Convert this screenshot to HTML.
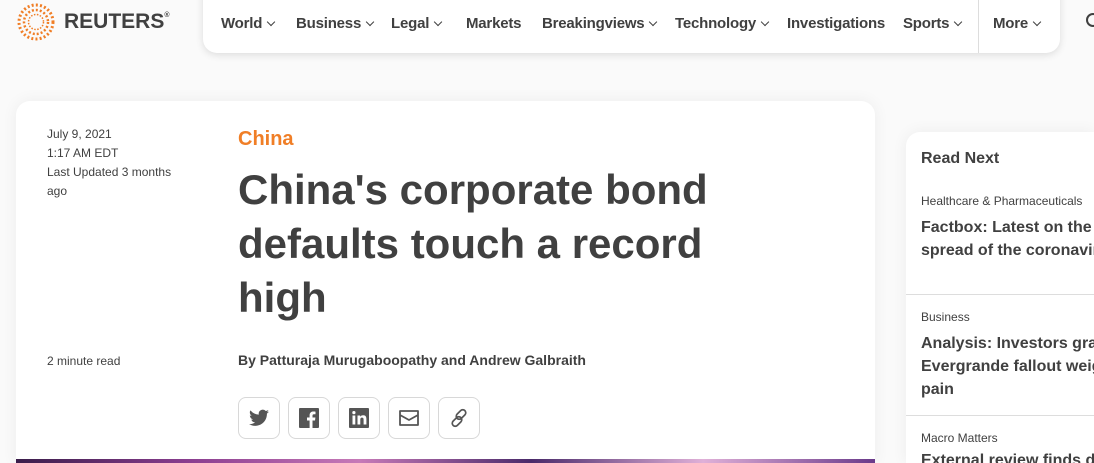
<!DOCTYPE html>
<html style="width:1094px;height:463px;overflow:hidden"><head><style>
*{margin:0;padding:0;box-sizing:border-box}
body{width:1094px;height:463px;overflow:hidden;background:#fafafa;font-family:"Liberation Sans",sans-serif;color:#404040;position:relative}
.nav{position:absolute;left:203px;top:-10px;width:857px;height:63px;background:#fff;border-radius:0 0 14px 14px;box-shadow:0 2px 8px rgba(0,0,0,.12)}
.nav span{position:absolute;top:25px;font-size:15px;font-weight:bold;color:#404040;letter-spacing:-.2px}
.chev{display:inline-block;width:6px;height:6px;border-right:1.6px solid #404040;border-bottom:1.6px solid #404040;transform:rotate(45deg);margin-left:6px;position:relative;top:-3px}
.card{position:absolute;left:16px;top:101px;width:859px;height:362px;background:#fff;border-radius:14px 14px 0 0;box-shadow:0 0 16px rgba(0,0,0,.06)}
.rcard{position:absolute;left:906px;top:132px;width:188px;height:331px;background:#fff;border-radius:14px 0 0 0;box-shadow:0 0 16px rgba(0,0,0,.06);overflow:hidden}
.abs{position:absolute}
.btn{position:absolute;top:397px;width:42px;height:42px;border:1px solid #d8d8d8;border-radius:8px;display:flex;align-items:center;justify-content:center}
</style></head><body>
<svg class="abs" style="left:16px;top:3px" width="40" height="38" viewBox="0 0 40 38">
<circle cx="20" cy="19" r="17" fill="none" stroke="#f07e26" stroke-width="3" stroke-dasharray="2 2.2"/>
<circle cx="20" cy="19" r="12" fill="none" stroke="#f07e26" stroke-width="2.5" stroke-dasharray="2 2"/>
<circle cx="20" cy="19" r="7.5" fill="none" stroke="#f07e26" stroke-width="1.5" stroke-dasharray="1.5 1.5"/>
</svg>
<div class="abs" style="left:64px;top:10px;font-size:21px;font-weight:bold;color:#404040">REUTERS<sup style="font-size:7px;vertical-align:top;position:relative;top:2px">®</sup></div>
<div class="nav">
<span style="left:18px">World<i class="chev"></i></span>
<span style="left:93px">Business<i class="chev"></i></span>
<span style="left:188px">Legal<i class="chev"></i></span>
<span style="left:263px">Markets</span>
<span style="left:339px">Breakingviews<i class="chev"></i></span>
<span style="left:472px">Technology<i class="chev"></i></span>
<span style="left:584px">Investigations</span>
<span style="left:700px">Sports<i class="chev"></i></span>
<div class="abs" style="left:775px;top:10px;width:1px;height:53px;background:#ddd"></div>
<span style="left:790px">More<i class="chev"></i></span>
</div>
<svg class="abs" style="left:1085px;top:12px" width="16" height="18"><circle cx="8" cy="8" r="6" fill="none" stroke="#404040" stroke-width="2"/></svg>
<div class="card"></div>
<div class="abs" style="left:47px;top:125px;font-size:12px;line-height:19px;color:#404040;width:140px">July 9, 2021<br>1:17 AM EDT<br>Last Updated 3 months ago</div>
<div class="abs" style="left:238px;top:128px;font-size:20px;font-weight:bold;color:#f07e26">China</div>
<div class="abs" style="left:238px;top:163px;font-size:42px;font-weight:bold;line-height:54px;color:#404040;width:500px">China's corporate bond defaults touch a record high</div>
<div class="abs" style="left:47px;top:354px;font-size:12px">2 minute read</div>
<div class="abs" style="left:238px;top:352px;font-size:14px;font-weight:bold">By Patturaja Murugaboopathy and Andrew Galbraith</div>
<div class="btn" style="left:238px"><svg width="20" height="18" viewBox="0 0 24 20"><path fill="#555" d="M24 2.4a9.8 9.8 0 0 1-2.8.8A4.9 4.9 0 0 0 23.3.4a9.9 9.9 0 0 1-3.1 1.2A4.9 4.9 0 0 0 11.8 6 14 14 0 0 1 1.7.9a4.9 4.9 0 0 0 1.5 6.6A4.9 4.9 0 0 1 1 6.9a4.9 4.9 0 0 0 3.9 4.8 4.9 4.9 0 0 1-2.2.1 4.9 4.9 0 0 0 4.6 3.4A9.9 9.9 0 0 1 0 17.2 14 14 0 0 0 7.5 19.4c9.1 0 14-7.5 14-14v-.6A10 10 0 0 0 24 2.4z"/></svg></div>
<div class="btn" style="left:288px"><svg width="20" height="20"><rect width="20" height="20" rx="1" fill="#555"/><path fill="#fff" d="M13.5 20v-7.5h2.5l.4-3h-2.9V7.7c0-.8.3-1.4 1.5-1.4h1.5V3.6c-.3 0-1.2-.1-2.2-.1-2.2 0-3.7 1.3-3.7 3.8v2.2H8v3h2.6V20z"/></svg></div>
<div class="btn" style="left:338px"><svg width="20" height="20"><rect width="20" height="20" rx="1" fill="#555"/><rect x="3.5" y="7.5" width="2.8" height="9" fill="#fff"/><circle cx="4.9" cy="4.6" r="1.6" fill="#fff"/><path fill="#fff" d="M8.5 7.5h2.7v1.3c.5-.9 1.6-1.5 3-1.5 2.6 0 3.2 1.7 3.2 3.9v5.3h-2.8v-4.7c0-1.1-.2-2.2-1.6-2.2s-1.7 1-1.7 2.2v4.7H8.5z"/></svg></div>
<div class="btn" style="left:388px"><svg width="22" height="18" viewBox="0 0 22 18"><path d="M2 2h18v14H2zM2 6l9 5 9-5" fill="none" stroke="#555" stroke-width="1.8" stroke-linejoin="round"/></svg></div>
<div class="btn" style="left:438px"><svg width="20" height="20" viewBox="0 0 20 20"><g fill="none" stroke="#555" stroke-width="1.7"><rect x="9" y="1" width="6" height="11" rx="3" transform="rotate(45 12 6.5)"/><rect x="5" y="8" width="6" height="11" rx="3" transform="rotate(45 8 13.5)"/></g></svg></div>
<div class="abs" style="left:16px;top:459px;width:859px;height:4px;background:linear-gradient(90deg,#3a1d4a,#8a3d8f,#c77ab8,#4a2a6a,#e0b0d8,#6a3a8a)"></div>
<div class="rcard">
<div class="abs" style="left:15px;top:18px;font-size:16px;font-weight:bold">Read Next</div>
<div class="abs" style="left:15px;top:62px;font-size:12px;white-space:nowrap">Healthcare &amp; Pharmaceuticals</div>
<div class="abs" style="left:15px;top:84px;font-size:16px;font-weight:bold;line-height:23px;white-space:nowrap">Factbox: Latest on the<br>spread of the coronavirus</div>
<div class="abs" style="left:0;top:162px;width:200px;height:1px;background:#ddd"></div>
<div class="abs" style="left:15px;top:178px;font-size:12px">Business</div>
<div class="abs" style="left:15px;top:200px;font-size:16px;font-weight:bold;line-height:23px;white-space:nowrap">Analysis: Investors grapple<br>Evergrande fallout weighs<br>pain</div>
<div class="abs" style="left:0;top:283px;width:200px;height:1px;background:#ddd"></div>
<div class="abs" style="left:15px;top:299px;font-size:12px">Macro Matters</div>
<div class="abs" style="left:15px;top:320px;font-size:16px;font-weight:bold;white-space:nowrap">External review finds d</div>
</div>
</body></html>
